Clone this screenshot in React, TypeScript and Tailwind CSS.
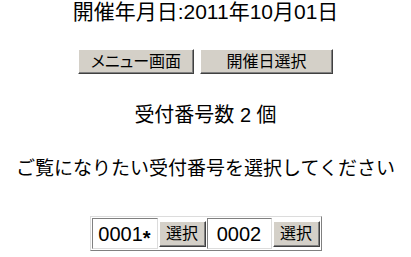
import React from "react";

const font = "[font-family:'Liberation_Sans','Noto_Sans_CJK_JP',sans-serif]";

function WinButton({ label, className }: { label: string; className: string }) {
  return (
    <button
      className={`flex items-center justify-center bg-[#d4d0c8] border border-t-white border-l-white border-r-[#404040] border-b-[#404040] shadow-[inset_-1px_-1px_0_#808080] text-black text-[16px] leading-none [font-feature-settings:'palt'] ${className}`}
    >
      {label}
    </button>
  );
}

export default function App() {
  return (
    <div className={`w-[411px] h-[257px] bg-white text-black flex flex-col items-center ${font}`}>
      <div className="text-[21px] leading-[24px] mt-0">開催年月日:2011年10月01日</div>
      <div className="flex gap-[6px] mt-[25px]">
        <WinButton label="メニュー画面" className="w-[116px] h-[25px]" />
        <WinButton label="開催日選択" className="w-[133px] h-[25px]" />
      </div>
      <div className="text-[20px] leading-[24px] mt-[29px]">受付番号数 2 個</div>
      <div className="text-[19px] leading-[24px] mt-[28px] [font-family:'Noto_Sans_CJK_JP',sans-serif]">
        ご覧になりたい受付番号を選択してください
      </div>
      <div className="mt-[37px] flex border border-t-[#dcdcdc] border-l-[#dcdcdc] border-r-[#808080] border-b-[#808080] p-px gap-px">
        <div className="w-[66px] h-[31px] flex items-center justify-center border border-t-[#808080] border-l-[#808080] border-r-[#dcdcdc] border-b-[#dcdcdc] text-[20px]">
          0001<span className="inline-block translate-y-[4px] font-bold">*</span>
        </div>
        <div className="h-[31px] flex items-center">
          <WinButton label="選択" className="w-[47px] h-[26px]" />
        </div>
        <div className="w-[65px] h-[31px] flex items-center justify-center border border-t-[#808080] border-l-[#808080] border-r-[#dcdcdc] border-b-[#dcdcdc] text-[20px]">
          0002
        </div>
        <div className="h-[31px] flex items-center">
          <WinButton label="選択" className="w-[47px] h-[26px]" />
        </div>
      </div>
    </div>
  );
}
